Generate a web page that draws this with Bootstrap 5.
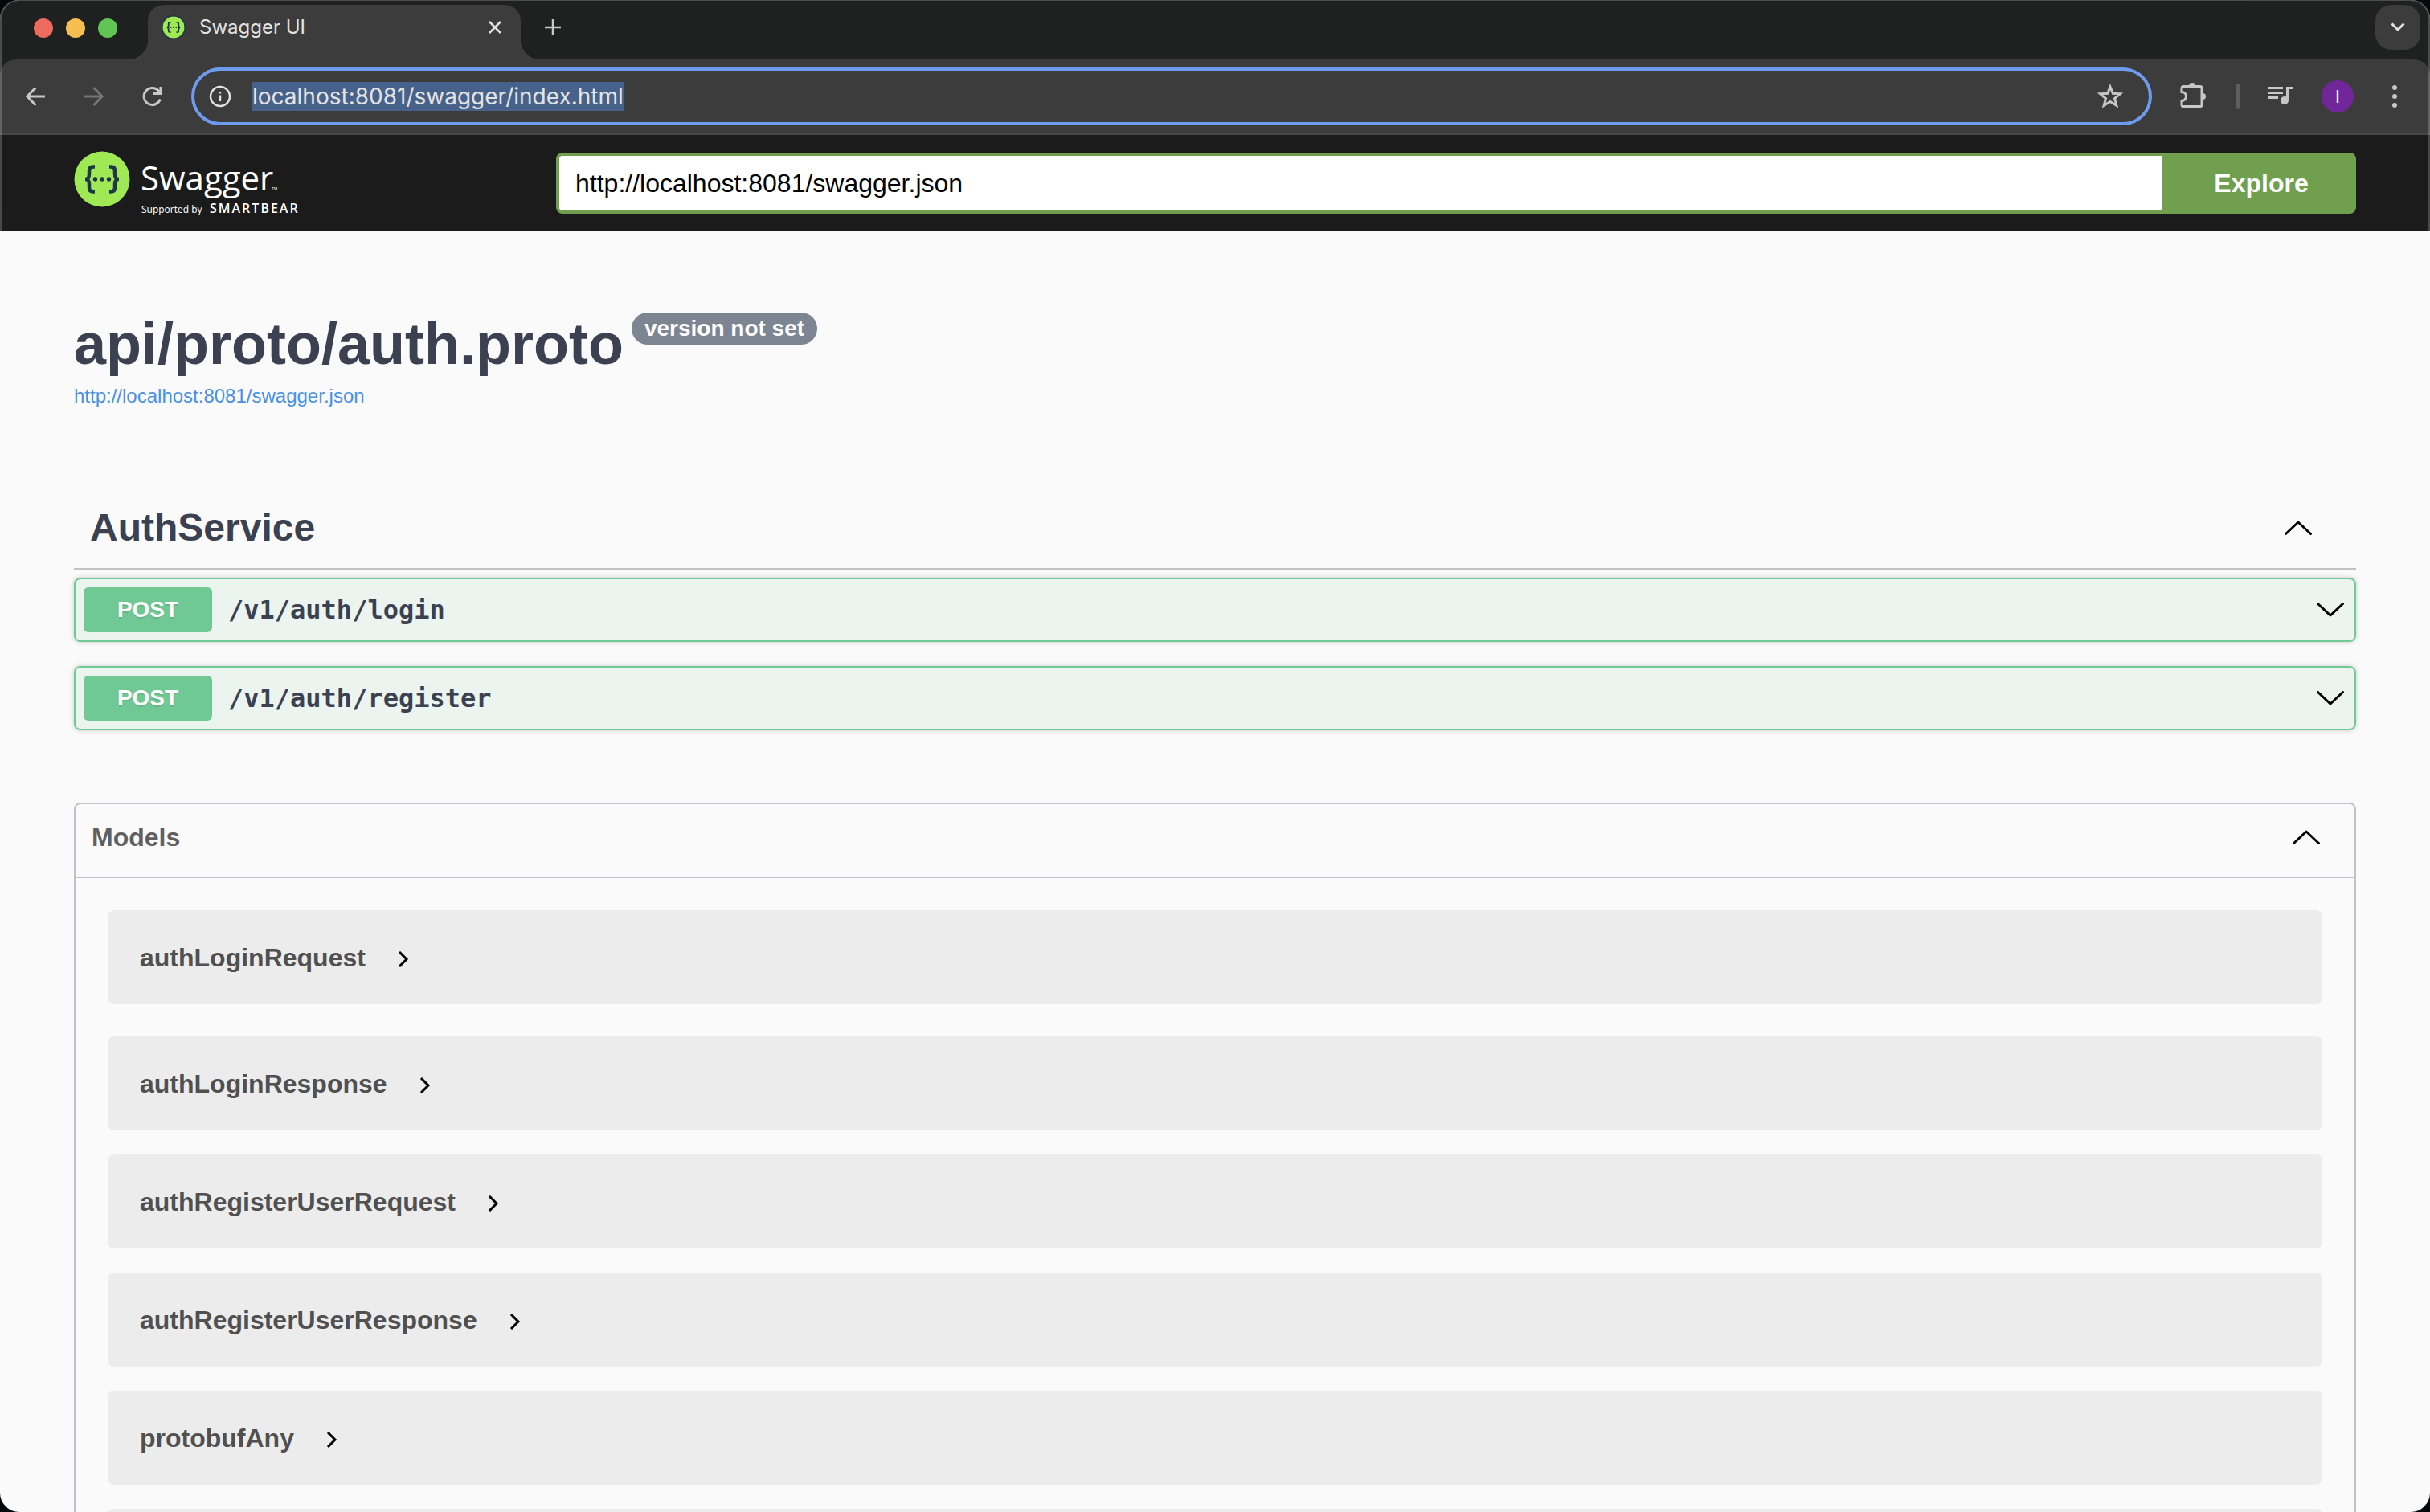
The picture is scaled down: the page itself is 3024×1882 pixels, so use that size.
<!DOCTYPE html>
<html lang="en">
<head>
<meta charset="utf-8">
<meta name="viewport" content="width=device-width, initial-scale=1">
<title>Swagger UI</title>
<link rel="stylesheet" href="https://cdn.jsdelivr.net/npm/bootstrap@5.3.0/dist/css/bootstrap.min.css">
<style>
  html, body { height: 100%; }
  body { background: #05090b; font-family: "Liberation Sans", Arial, sans-serif; color: #3b4151; overflow: hidden; }
  svg { display: block; flex: none; }
  button { font-family: inherit; }
  .plain-btn { background: none; border: 0; padding: 0; color: inherit; display: flex; align-items: center; justify-content: center; }

  /* browser window */
  .app-window { height: 100vh; border-radius: 24px; overflow: hidden; background: #fafafa; }
  .window-edge { inset: 0; border-radius: 24px; pointer-events: none; z-index: 5; }
  .window-edge::before { content: ""; position: absolute; inset: 0 0 auto 0; height: 288px; border: solid rgba(255,255,255,.2); border-width: 1px 2px 0; border-radius: 24px 24px 0 0; }
  .tab-strip { height: 74px; background: #1f2120; padding: 6px 12px 0 42px; font-family: Inter, "Noto Sans", sans-serif; }
  .lights { gap: 16px; height: 58px; width: 142px; }
  .light { width: 24px; height: 24px; border-radius: 50%; }
  .light-close { background: #ed6a5f; }
  .light-min { background: #f5bf4f; }
  .light-max { background: #61c555; }
  .tab-item { width: 464px; height: 68px; background: #3c3c3c; border-radius: 20px 20px 0 0; color: #e3e3e3; font-size: 24px; line-height: 32px; padding: 0 24px 12px 17px; gap: 17px; }
  .tab-item::before, .tab-item::after { content: ""; position: absolute; bottom: 0; width: 24px; height: 24px; }
  .tab-item::before { right: 100%; background: radial-gradient(circle at 0 0, transparent 24px, #3c3c3c 24px); }
  .tab-item::after { left: 100%; background: radial-gradient(circle at 100% 0, transparent 24px, #3c3c3c 24px); }
  .new-tab { width: 80px; height: 56px; color: #c7c7c7; }
  .tab-search { width: 56px; height: 56px; background: #3c3c3c; border-radius: 20px; color: #e3e3e3; }
  .toolbar-wrap { background: #1f2120; }
  .toolbar-row { height: 94px; background: #3c3c3c; border-bottom: 2px solid #474747; border-radius: 20px 20px 0 0; padding: 0 28px; color: #c7c7c7; font-family: Inter, "Noto Sans", sans-serif; }
  .nav-icons { gap: 40px; width: 210px; padding-left: 2px; }
  .omnibox { height: 72px; border: 4px solid #6f9bef; border-radius: 36px; padding: 0 32px 0 18px; gap: 26px; }
  .omnibox-url { background: none; border: 0; padding: 0; outline: 0; color: #e3e3e3; font-size: 28px; line-height: 36px; }
  .omnibox-url::selection { background: #47628a; color: #e3e3e3; }
  .tool-icons { gap: 35px; padding-left: 34px; }
  .divider-bar { width: 4px; height: 32px; border-radius: 2px; background: #5e5e5e; }
  .avatar { width: 40px; height: 40px; border-radius: 50%; background: #71269a; color: #fff; font-size: 22px; }

  /* swagger */
  .page-x { padding-left: 92px; padding-right: 92px; }
  .topbar { height: 120px; background: #1b1b1b; }
  .logo-link { width: 600px; }
  .smartbear { letter-spacing: 2px; }
  .spec-field { height: 76px; border: 4px solid #70a04e; border-right: 0; border-radius: 8px 0 0 8px; padding: 0 20px; font-size: 32px; color: #000; background: #fff; min-width: 0; }
  .explore-btn { width: 241px; height: 76px; border: 0; border-radius: 0 8px 8px 0; background: #70a04e; color: #fff; font-size: 32px; font-weight: 700; padding: 0 0 0 5px; }
  .api-head { padding-top: 98px; }
  .api-title { font-size: 72px; line-height: 84px; font-weight: 700; margin: 0; gap: 10px; }
  .version-pill { font-size: 28px; line-height: 40px; border-radius: 20px; background: #7d8492; color: #fff; padding: 0 16px; margin-top: 3px; }
  .spec-link { font-size: 24px; line-height: 28px; margin-top: 9px; color: #4990e2; text-decoration: none; }
  .tag-row { margin-top: 101px; height: 101px; border-bottom: 2px solid #c1c2c8; padding: 0 55px 2px 20px; margin-bottom: 10px; }
  .tag-row h2 { font-size: 48px; line-height: 56px; font-weight: 700; margin: 0; }
  .op-row { height: 80px; border: 2px solid #6fc993; border-radius: 8px; background: #ebf4ef; box-shadow: 0 0 6px rgba(0,0,0,.19); padding: 0 13px 0 10px; margin-bottom: 30px; color: #3b4151; }
  .verb { width: 160px; height: 56px; line-height: 56px; border-radius: 6px; background: #70c994; color: #fff; font-size: 28px; font-weight: 700; text-shadow: 0 2px 0 rgba(0,0,0,.1); text-align: center; margin-right: 20px; }
  .op-path { font-family: "DejaVu Sans Mono", monospace; font-size: 32px; font-weight: 700; }
  .models-box { border: 2px solid #c1c2c8; border-radius: 8px; margin-top: 90px; }
  .models-head { height: 92px; border-bottom: 2px solid #c1c2c8; padding: 0 43px 8px 20px; }
  .models-head h3 { font-size: 32px; line-height: 40px; font-weight: 700; margin: 0; color: #606060; }
  .models-list { padding: 40px; gap: 30px; }
  .model-item { height: 117px; border-radius: 8px; background: #ececec; color: #505050; font-size: 32px; font-weight: 700; gap: 40px; padding: 0 40px; }
  .model-item:first-child { margin-bottom: 10px; }
  .model-item .plain-btn { padding-top: 4px; }
</style>
</head>
<body>
<svg width="0" height="0" class="position-absolute" aria-hidden="true">
  <symbol id="up" viewBox="0 0 34 18"><path d="M1.500 16.500 17 2 32.500 16.500" fill="none" stroke="#000" stroke-width="3" stroke-linecap="round" stroke-linejoin="round"/></symbol>
  <symbol id="down" viewBox="0 0 34 18"><path d="M1.500 1.500 17 16 32.500 1.500" fill="none" stroke="#000" stroke-width="3" stroke-linecap="round" stroke-linejoin="round"/></symbol>
  <symbol id="next" viewBox="0 0 14 20"><path d="M2 1 11 10 2 19" fill="none" stroke="#000" stroke-width="3"/></symbol>
  <symbol id="braces" viewBox="0 0 70 70">
    <circle cx="35" cy="35" r="34.500" fill="#9fe954"/>
    <g fill="none" stroke="#1d3649" stroke-width="4.500">
      <path d="M26 19.500h-2c-4 0-5 2-5 5v4c0 4-1 6.500-5 6.500 4 0 5 2.500 5 6.500v4c0 3 1 5 5 5h2"/>
      <path d="M44 19.500h2c4 0 5 2 5 5v4c0 4 1 6.500 5 6.500-4 0-5 2.500-5 6.500v4c0 3-1 5-5 5h-2"/>
    </g>
    <g fill="#1d3649"><circle cx="26.500" cy="35" r="2.700"/><circle cx="35" cy="35" r="2.700"/><circle cx="43.500" cy="35" r="2.700"/></g>
  </symbol>
</svg>

<div class="app-window d-flex flex-column position-relative">
  <div class="window-edge position-absolute"></div>

  <div class="tab-strip d-flex flex-shrink-0">
    <div class="lights d-flex align-items-center">
      <span class="light light-close"></span>
      <span class="light light-min"></span>
      <span class="light light-max"></span>
    </div>
    <div class="tab-item d-flex align-items-center position-relative">
      <svg width="30" height="30" viewBox="0 0 70 70"><circle cx="35" cy="35" r="35" fill="#1d3649"/><use href="#braces" x="3" y="3" width="64" height="64"/></svg>
      <span class="flex-grow-1">Swagger UI</span>
      <button class="plain-btn" aria-label="Close tab"><svg width="16" height="16" viewBox="0 0 16 16"><path d="M1 1 15 15M15 1 1 15" stroke="#e3e3e3" stroke-width="2.500"/></svg></button>
    </div>
    <button class="plain-btn new-tab" aria-label="New tab"><svg width="20" height="20" viewBox="0 0 20 20"><path d="M10 0V20M0 10H20" stroke="currentColor" stroke-width="2.500"/></svg></button>
    <button class="plain-btn tab-search ms-auto" aria-label="Search tabs"><svg width="18" height="12" viewBox="0 0 18 12"><path d="M1.500 1.500 9 9 16.500 1.500" fill="none" stroke="currentColor" stroke-width="3"/></svg></button>
  </div>

  <div class="toolbar-wrap flex-shrink-0">
    <div class="toolbar-row d-flex align-items-center">
      <div class="nav-icons d-flex align-items-center">
        <button class="plain-btn" aria-label="Back"><svg width="32" height="32" viewBox="0 0 32 32"><path d="M26 16H4M14.500 5 3.800 16 14.500 27" fill="none" stroke="#c7c7c7" stroke-width="3"/></svg></button>
        <button class="plain-btn" aria-label="Forward"><svg width="32" height="32" viewBox="0 0 32 32"><path d="M3 16H25M14.500 5 25.200 16 14.500 27" fill="none" stroke="#757575" stroke-width="3"/></svg></button>
        <button class="plain-btn" aria-label="Reload"><svg width="32" height="32" viewBox="0 0 32 32"><path d="M25.500 19.500A10.500 10.500 0 1 1 23 8.500L26 11.500" fill="none" stroke="#c7c7c7" stroke-width="3"/><path d="M27.500 4V14H17V11H24.500V4Z" fill="#c7c7c7"/></svg></button>
      </div>
      <div class="omnibox d-flex align-items-center flex-grow-1">
        <svg width="28" height="28" viewBox="0 0 28 28"><circle cx="14" cy="14" r="12" fill="none" stroke="#e3e3e3" stroke-width="2.500"/><path d="M14 12.500V20M14 8V10.500" stroke="#e3e3e3" stroke-width="2.500"/></svg>
        <input id="url" class="omnibox-url flex-grow-1" type="text" value="localhost:8081/swagger/index.html" aria-label="Address" autofocus>
        <button class="plain-btn" aria-label="Bookmark this page"><svg width="32" height="32" viewBox="0 0 32 32"><path d="M16 4 19.300 12.200 28.500 12.800 21.500 18.600 23.800 27.200 16 22.500 8.200 27.200 10.500 18.600 3.500 12.800 12.700 12.200Z" fill="none" stroke="#c7c7c7" stroke-width="3"/></svg></button>
      </div>
      <div class="tool-icons d-flex align-items-center">
        <button class="plain-btn" aria-label="Extensions"><svg width="36" height="36" viewBox="0 0 36 36"><path d="M5 5.500H26a2 2 0 0 1 2 2V28.500a2 2 0 0 1-2 2H5a2 2 0 0 1-2-2V23.500a5.500 5.500 0 0 0 0-11V7.500a2 2 0 0 1 2-2Z" fill="none" stroke="#c7c7c7" stroke-width="3"/><path d="M12 5a4 4 0 0 1 8 0ZM29 14a4 4 0 0 1 0 8Z" fill="#c7c7c7"/></svg></button>
        <span class="divider-bar"></span>
        <button class="plain-btn" aria-label="Media controls"><svg width="32" height="32" viewBox="0 0 32 32"><path d="M1 5.500H19M1 11.500H19M1 17.500H13" stroke="#c7c7c7" stroke-width="3"/><path d="M24.500 21V5.500H31" fill="none" stroke="#c7c7c7" stroke-width="3"/><circle cx="21" cy="21" r="5" fill="#c7c7c7"/></svg></button>
        <button class="plain-btn avatar" aria-label="Profile">I</button>
        <button class="plain-btn" aria-label="Menu"><svg width="32" height="32" viewBox="0 0 32 32" fill="#c7c7c7"><circle cx="16" cy="5" r="3"/><circle cx="16" cy="16" r="3"/><circle cx="16" cy="27" r="3"/></svg></button>
      </div>
    </div>
  </div>

  <header class="topbar page-x d-flex align-items-center flex-shrink-0">
    <a class="logo-link" href="#" aria-label="Swagger, supported by SmartBear">
      <svg width="290" height="84" viewBox="0 0 290 84" fill="#fff">
        <use href="#braces" x="0" y="2" width="70" height="70"/>
        <text x="83" y="51" font-family="Open Sans, sans-serif" font-size="42">Swagger</text>
        <text x="246" y="51" font-family="Open Sans, sans-serif" font-size="5">TM</text>
        <text x="84" y="79" font-family="Open Sans, sans-serif" font-size="12">Supported by</text>
        <text class="smartbear" x="169" y="79" font-family="Open Sans, sans-serif" font-size="16" font-weight="600">SMARTBEAR</text>
      </svg>
    </a>
    <form class="d-flex flex-grow-1" onsubmit="return false">
      <input class="spec-field flex-grow-1" type="text" value="http://localhost:8081/swagger.json" aria-label="Specification URL">
      <button class="explore-btn" type="submit">Explore</button>
    </form>
  </header>

  <main class="page-x flex-grow-1 overflow-hidden">
    <section class="api-head d-flex flex-column align-items-start">
      <h1 class="api-title d-flex align-items-start">api/proto/auth.proto <span class="version-pill">version not set</span></h1>
      <a class="spec-link" href="#">http://localhost:8081/swagger.json</a>
    </section>

    <section>
      <div class="tag-row d-flex align-items-center justify-content-between">
        <h2>AuthService</h2>
        <button class="plain-btn" aria-label="Collapse AuthService"><svg width="34" height="18"><use href="#up"/></svg></button>
      </div>
      <div class="op-row d-flex align-items-center">
        <span class="verb">POST</span><span class="op-path flex-grow-1">/v1/auth/login</span>
        <button class="plain-btn" aria-label="Expand login"><svg width="34" height="18"><use href="#down"/></svg></button>
      </div>
      <div class="op-row d-flex align-items-center">
        <span class="verb">POST</span><span class="op-path flex-grow-1">/v1/auth/register</span>
        <button class="plain-btn" aria-label="Expand register"><svg width="34" height="18"><use href="#down"/></svg></button>
      </div>
    </section>

    <section class="models-box">
      <div class="models-head d-flex align-items-center justify-content-between">
        <h3>Models</h3>
        <button class="plain-btn" aria-label="Collapse models"><svg width="34" height="18"><use href="#up"/></svg></button>
      </div>
      <div class="models-list d-flex flex-column">
        <div class="model-item d-flex align-items-center">authLoginRequest<button class="plain-btn" aria-label="Expand"><svg width="14" height="20"><use href="#next"/></svg></button></div>
        <div class="model-item d-flex align-items-center">authLoginResponse<button class="plain-btn" aria-label="Expand"><svg width="14" height="20"><use href="#next"/></svg></button></div>
        <div class="model-item d-flex align-items-center">authRegisterUserRequest<button class="plain-btn" aria-label="Expand"><svg width="14" height="20"><use href="#next"/></svg></button></div>
        <div class="model-item d-flex align-items-center">authRegisterUserResponse<button class="plain-btn" aria-label="Expand"><svg width="14" height="20"><use href="#next"/></svg></button></div>
        <div class="model-item d-flex align-items-center">protobufAny<button class="plain-btn" aria-label="Expand"><svg width="14" height="20"><use href="#next"/></svg></button></div>
        <div class="model-item"></div>
      </div>
    </section>
  </main>
</div>
<script src="https://cdn.jsdelivr.net/npm/bootstrap@5.3.0/dist/js/bootstrap.bundle.min.js"></script>
<script>
  const url = document.getElementById('url');
  url.focus();
  url.select();
</script>
</body>
</html>
